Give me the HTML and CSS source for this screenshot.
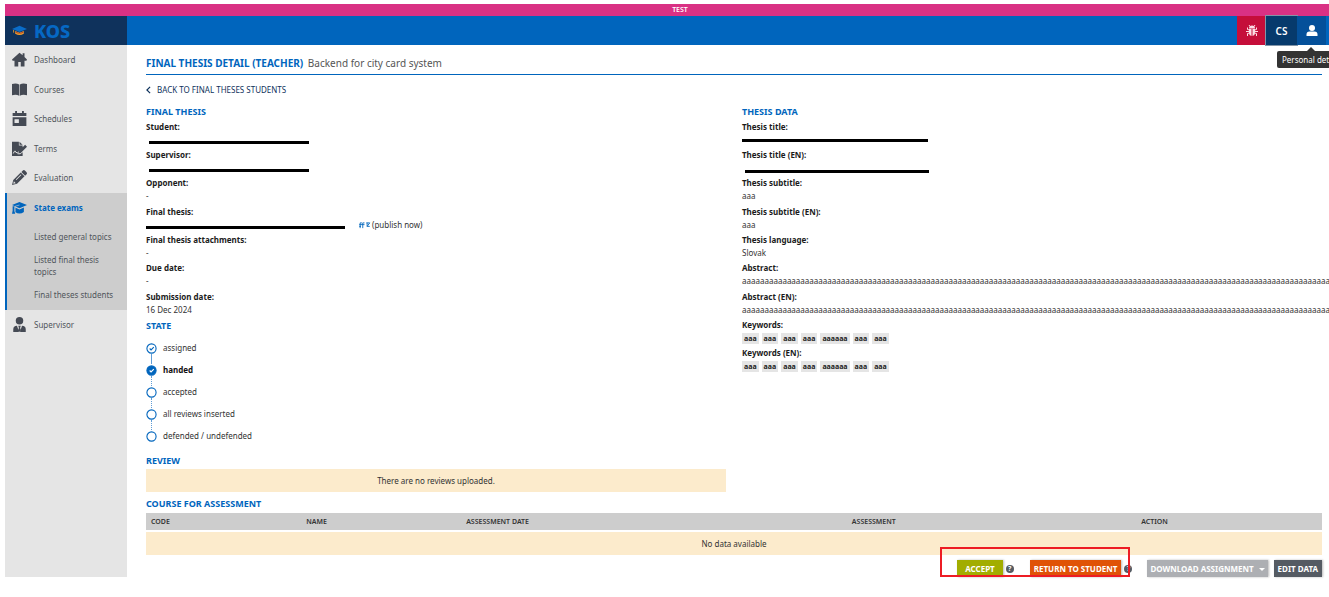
FILE: index.html
```html
<!DOCTYPE html>
<html lang="en">
<head>
<meta charset="utf-8">
<title>KOS – Final thesis detail</title>
<link rel="stylesheet" href="styles.css">
</head>
<body>
<div class="env">TEST</div>
<header class="top">
  <a class="brand" href="#">
    <svg class="brand-icon" viewBox="0 0 28 20"><path fill="#f0a22e" d="M6 11v5q8 5 16 0v-5l-8 3z"/><path fill="#b5452a" d="M7 12v2q7 4 14 0v-2l-7 3z"/><path fill="#0a6cc8" d="M14 1 0 7l14 6 14-6z"/><path stroke="#f0a22e" stroke-width="1.500" d="M3 9v5"/></svg>
    <span>KOS</span>
  </a>
  <div class="tools">
    <button class="tool tool-bug" aria-label="Report a bug"><svg viewBox="0 0 24 24" fill="none" stroke="#fbdde4" stroke-width="2"><path fill="#fbdde4" stroke="none" d="M6 8a6 6 0 0 1 12 0zM6 9h5v14q-5-1-5-7zM13 9h5v7q0 6-5 7z"/><path d="M8 4 6 1M16 4l2-3M7 11l-4-1V6M17 11l4-1V6M7 14H0M17 14h7M7 17l-4 1v5M17 17l4 1v5"/></svg></button>
    <button class="tool tool-lang">CS</button>
    <button class="tool tool-user" aria-label="Personal details"><svg viewBox="0 0 24 24" fill="#fff"><circle cx="12" cy="7" r="6"/><path d="M1 23v-3q0-6 6-6h10q6 0 6 6v3z"/></svg></button>
    <div class="tip">Personal details</div>
  </div>
</header>
<div class="shell">
  <nav class="side">
    <a class="item" href="#"><svg viewBox="0 0 24 24"><path d="M12 1 0 12l1 2h3v9h6v-7h4v7h6v-9h3l1-2-4-4V2h-3v3z"/></svg>Dashboard</a>
    <a class="item" href="#"><svg viewBox="0 0 24 24"><path d="M0 3q7-2 11.500 1v18Q7 19 0 21zM24 3q-7-2-11.500 1v18Q17 19 24 21z"/></svg>Courses</a>
    <a class="item" href="#"><svg viewBox="0 0 24 24"><path fill-rule="evenodd" d="M5 0h3v3h8V0h3v3h4v5H1V3h4zM1 10h22v14H1zm3 3v6h7v-6z"/></svg>Schedules</a>
    <a class="item" href="#"><svg viewBox="0 0 24 24"><path d="M0 1h11v6h6v3l-8 8v3h4l4-3v6H0zM12 1l5 5h-5zM21 6l3 3-10 10-4 1 1-4z"/><path fill="none" stroke="#e5e5e5" stroke-width="1.500" d="M2 20q3-7 4-2l3 1"/></svg>Terms</a>
    <a class="item" href="#"><svg viewBox="0 0 24 24"><path fill-rule="evenodd" d="m14 4 6 6L8 22l-8 2 2-8zm1-1 2-2q2-2 4 0l2 2q2 2 0 4l-2 2zM3 18l-1 4 4-1zM14 7l-8 8 1 1 8-8z"/></svg>Evaluation</a>
    <div class="group">
      <a class="item item-on" href="#"><svg viewBox="0 0 24 24"><path d="M12 3 0 8l12 5 12-5zM5 12v7q7 5 14 0v-7l-7 3zM1 10h3v7l1 5H0l1-5z"/><path fill="none" stroke="#cdcdcd" d="M12 8 5 10v9"/></svg>State exams</a>
      <a class="sub" href="#">Listed general topics</a>
      <a class="sub" href="#">Listed final thesis topics</a>
      <a class="sub" href="#">Final theses students</a>
    </div>
    <a class="item" href="#"><svg viewBox="0 0 24 24"><circle cx="12" cy="6" r="6"/><path d="M2 24v-4q0-6 6-6l3 9v1zM22 24v-4q0-6-6-6l-3 9v1zM10 14h4l-1 3 1 4-2 3-2-3 1-4z"/></svg>Supervisor</a>
  </nav>
  <main class="main">
    <h1 class="title">FINAL THESIS DETAIL (TEACHER) <span>Backend for city card system</span></h1>
    <a class="back" href="#"><svg viewBox="0 0 6 10"><path d="M5 1 1 5l4 4"/></svg>BACK TO FINAL THESES STUDENTS</a>
    <div class="cols">
      <section>
        <h2>FINAL THESIS</h2>
        <dl class="fields">
          <div><dt>Student:</dt><dd><span class="bar bar-person"></span></dd></div>
          <div><dt>Supervisor:</dt><dd><span class="bar bar-person"></span></dd></div>
          <div><dt>Opponent:</dt><dd>-</dd></div>
          <div><dt>Final thesis:</dt><dd><span class="bar bar-file"></span><a class="publish" href="#" aria-label="Open in a new window"><svg viewBox="0 0 14 8"><path d="M1 3h6M1 5h2M2 7V1h2M5 7V1h2M9 1h4M10 1v4h3M10 5l3-4"/></svg></a>(publish now)</dd></div>
          <div><dt>Final thesis attachments:</dt><dd>-</dd></div>
          <div><dt>Due date:</dt><dd>-</dd></div>
          <div><dt>Submission date:</dt><dd>16 Dec 2024</dd></div>
        </dl>
        <h2>STATE</h2>
        <ol class="steps">
          <li class="past"><svg viewBox="0 0 12 12"><circle cx="6" cy="6" r="5"/><path d="m4 6 1.500 1.500L8.500 4.500"/></svg>assigned</li>
          <li class="now"><svg viewBox="0 0 12 12"><circle cx="6" cy="6" r="5"/><path d="m4 6 1.500 1.500L8.500 4.500"/></svg>handed</li>
          <li><svg viewBox="0 0 12 12"><circle cx="6" cy="6" r="5"/></svg>accepted</li>
          <li><svg viewBox="0 0 12 12"><circle cx="6" cy="6" r="5"/></svg>all reviews inserted</li>
          <li><svg viewBox="0 0 12 12"><circle cx="6" cy="6" r="5"/></svg>defended / undefended</li>
        </ol>
        <h2>REVIEW</h2>
        <p class="empty">There are no reviews uploaded.</p>
      </section>
      <section>
        <h2>THESIS DATA</h2>
        <dl class="fields">
          <div><dt>Thesis title:</dt><dd><span class="bar bar-title"></span></dd></div>
          <div><dt>Thesis title (EN):</dt><dd><span class="bar bar-title-en"></span></dd></div>
          <div><dt>Thesis subtitle:</dt><dd>aaa</dd></div>
          <div><dt>Thesis subtitle (EN):</dt><dd>aaa</dd></div>
          <div><dt>Thesis language:</dt><dd>Slovak</dd></div>
          <div><dt>Abstract:</dt><dd>aaaaaaaaaaaaaaaaaaaaaaaaaaaaaaaaaaaaaaaaaaaaaaaaaaaaaaaaaaaaaaaaaaaaaaaaaaaaaaaaaaaaaaaaaaaaaaaaaaaaaaaaaaaaaaaaaaaaaaaaaaaaaaaaaaaaaaaaaaaaaa</dd></div>
          <div><dt>Abstract (EN):</dt><dd>aaaaaaaaaaaaaaaaaaaaaaaaaaaaaaaaaaaaaaaaaaaaaaaaaaaaaaaaaaaaaaaaaaaaaaaaaaaaaaaaaaaaaaaaaaaaaaaaaaaaaaaaaaaaaaaaaaaaaaaaaaaaaaaaaaaaaaaaaaaaaa</dd></div>
          <div><dt>Keywords:</dt><dd class="tags"><span>aaa</span><span>aaa</span><span>aaa</span><span>aaa</span><span>aaaaaa</span><span>aaa</span><span>aaa</span></dd></div>
          <div><dt>Keywords (EN):</dt><dd class="tags"><span>aaa</span><span>aaa</span><span>aaa</span><span>aaa</span><span>aaaaaa</span><span>aaa</span><span>aaa</span></dd></div>
        </dl>
      </section>
    </div>
    <h2>COURSE FOR ASSESSMENT</h2>
    <table class="grid">
      <thead><tr><th class="c-code">CODE</th><th class="c-name">NAME</th><th class="c-date">ASSESSMENT DATE</th><th class="c-mark">ASSESSMENT</th><th>ACTION</th></tr></thead>
      <tbody><tr><td colspan="5">No data available</td></tr></tbody>
    </table>
    <div class="actions">
      <div class="decide">
        <button class="btn btn-accept">ACCEPT</button><span class="help">?</span>
        <button class="btn btn-return">RETURN TO STUDENT</button><span class="help">?</span>
      </div>
      <button class="btn btn-download">DOWNLOAD ASSIGNMENT<i class="caret"></i></button>
      <button class="btn btn-edit">EDIT DATA</button>
    </div>
  </main>
</div>
</body>
</html>
```
FILE: styles.css
```css
* { box-sizing: border-box; }
body {
  margin: 0;
  padding: 4px 0 19px 5px;
  overflow-x: hidden;
  background: #fff;
  color: #333;
  font: 8px/12px "Noto Sans", "Open Sans", sans-serif;
}
a { color: inherit; text-decoration: none; }
button { border: 0; font: inherit; color: #fff; cursor: pointer; }
h1, h2, p, dl, dd, ol { margin: 0; padding: 0; }

.env {
  padding-left: 26px;
  background: #d93184;
  color: #fff;
  font-size: 7px;
  font-weight: 600;
  text-align: center;
}
.top {
  display: flex;
  justify-content: space-between;
  height: 29px;
  background: #0065bd;
}
.brand {
  display: flex;
  align-items: center;
  gap: 7px;
  width: 122px;
  padding-left: 7px;
  background: #0f325c;
  color: #0668c4;
  font-size: 18px;
  font-weight: 800;
}
.brand-icon { width: 15px; height: 11px; }
.tools { position: relative; display: flex; padding-right: 3px; }
.tool {
  display: flex;
  align-items: center;
  justify-content: center;
  width: 29px;
  padding: 0;
}
.tool svg { width: 12px; height: 13px; }
.tool-bug { background: #c50e3a; }
.tool-lang {
  width: 31px;
  background: #063a6c;
  outline: 1px solid #8295a8;
  font-size: 10px;
  font-weight: 600;
}
.tool-user { background: #04509a; }
.tip {
  position: absolute;
  top: 35px;
  left: 40px;
  z-index: 2;
  padding: 2px 5px;
  border-radius: 2px;
  background: #333;
  color: #fff;
  line-height: 13px;
  white-space: nowrap;
}
.tip::before {
  content: "";
  position: absolute;
  top: -4px;
  left: 30px;
  border: 4px solid transparent;
  border-top: 0;
  border-bottom-color: #333;
}

.shell { display: flex; }
.side {
  flex: 0 0 122px;
  background: #e5e5e5;
  color: #50555b;
}
.item {
  display: flex;
  align-items: center;
  gap: 7px;
  height: 29px;
  margin-bottom: 1px;
  padding-left: 7px;
}
.item:nth-child(even) { margin-bottom: 0; }
.item svg { width: 15px; height: 15px; fill: #454a54; }
.group {
  padding-bottom: 9px;
  border-left: 2px solid #0065bd;
  background: #cdcdcd;
}
.item-on {
  margin-bottom: 9px;
  padding-left: 5px;
  color: #0065bd;
  font-weight: 700;
}
.item-on svg { fill: #0065bd; }
.sub { display: block; padding: 0 12px 11px 27px; }
.sub:last-child { padding-bottom: 0; }

.main { flex: 1; min-width: 0; padding: 9px 7px 0 19px; }
.title {
  padding-bottom: 2px;
  border-bottom: 1px solid #0065bd;
  color: #0065bd;
  font-size: 10px;
  font-weight: 700;
  line-height: 18px;
}
.title span { margin-left: 2px; color: #555; font-weight: 400; }
.back {
  display: flex;
  align-items: center;
  gap: 6px;
  height: 29px;
  color: #0f325c;
}
.back svg { width: 5px; height: 8px; fill: none; stroke: #0f325c; stroke-width: 1.500; }
h2 { color: #0065bd; font-size: 9px; font-weight: 700; line-height: 16px; }
.cols { display: grid; grid-template-columns: minmax(0, 1fr) minmax(0, 1fr); gap: 16px; }

.fields > div { height: 28px; }
.fields > div:nth-child(3n) { height: 29px; }
dt { color: #1b1b1b; font-weight: 700; line-height: 14px; }
dd { display: flex; align-items: center; height: 12px; }
.bar { height: 3px; background: #000; }
.bar-person { width: 160px; margin: 4px 3px 0; }
.bar-title { width: 186px; }
.bar-title-en { width: 184px; margin: 6px 0 0 3px; }
.bar-file { width: 199px; margin: 4px 13px 0 0; }
.publish svg { display: block; width: 13px; height: 7px; margin-right: 1px; fill: none; stroke: #0065bd; }
.tags { gap: 3px; }
.tags span { padding: 0 2px; background: #e5e5e5; color: #222; font-size: 7px; font-weight: 700; line-height: 11px; }

.steps { padding-top: 3px; padding-bottom: 6px; list-style: none; }
.steps li { position: relative; display: flex; align-items: center; gap: 6px; height: 22px; }
.steps svg { width: 11px; height: 11px; fill: none; stroke: #0065bd; stroke-width: 1.200; }
.steps li + li::before {
  content: "";
  position: absolute;
  left: 5px;
  top: -5px;
  height: 10px;
  border-left: 1px dotted #5f9dd6;
}
.steps .past + li::before { border-left-style: solid; }
.steps .now { color: #111; font-weight: 700; }
.steps .now circle { fill: #0065bd; }
.steps .now path { stroke: #fff; }

.empty { margin-bottom: 4px; background: #fcebcc; line-height: 23px; text-align: center; }
.grid { width: 100%; margin-top: 1px; border-collapse: collapse; table-layout: fixed; }
.grid th {
  padding: 0 5px;
  background: #cdcdcd;
  border-bottom: 2px solid #fff;
  font-size: 7px;
  font-weight: 600;
  line-height: 17px;
  text-align: left;
}
.grid td { padding: 0; background: #fcebcc; line-height: 23px; text-align: center; }
.c-code { width: 13.2%; }
.c-name { width: 13.6%; }
.c-date { width: 32.8%; }
.c-mark { width: 24.6%; }

.actions { display: flex; justify-content: flex-end; gap: 6px; padding-top: 5px; }
.decide { position: relative; display: flex; align-items: center; margin-right: 9px; }
.decide::after {
  content: "";
  position: absolute;
  inset: -13px 2px 0 -17px;
  border: 2px solid #ed1c24;
}
.btn { height: 17px; padding: 0 4px; font-weight: 700; line-height: 17px; box-shadow: 1px 0 2px #bbb; }
.btn-accept { padding: 0 8px; background: #a2ad00; }
.btn-return { background: #e05206; }
.btn-download { padding: 0 3px; background: #adafb3; }
.btn-edit { background: #555b63; }
.help {
  width: 8px;
  height: 8px;
  margin: 0 16px 0 3px;
  border-radius: 4px;
  background: #555b63;
  color: #fff;
  font-size: 7px;
  font-weight: 700;
  line-height: 8px;
  text-align: center;
}
.help:last-child { margin-right: 0; }
.caret {
  display: inline-block;
  margin-left: 5px;
  border: 3px solid transparent;
  border-top-color: #fff;
  border-bottom: 0;
  vertical-align: middle;
}
```
